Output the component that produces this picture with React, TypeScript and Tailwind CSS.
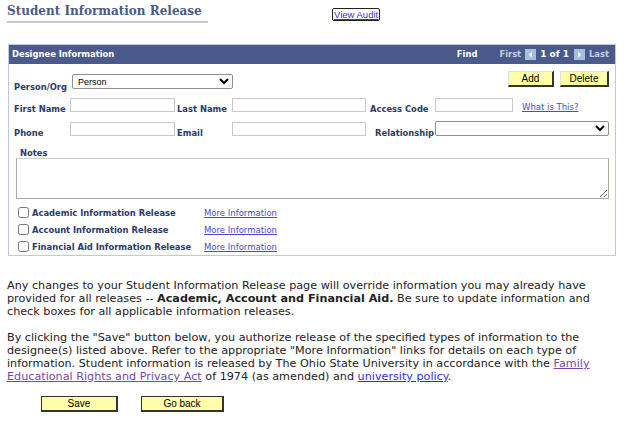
import React from "react";

const V = { fontFamily: '"DejaVu Sans", Verdana, sans-serif' };
const A = { fontFamily: '"Liberation Sans", Arial, sans-serif' };

function NavIcon({ dir }: { dir: "l" | "r" }) {
  return (
    <svg width="11" height="11" viewBox="0 0 11 11" className="block shrink-0">
      <rect x="0" y="0" width="11" height="11" fill="#a7bfd9" />
      {dir === "l" ? (
        <polygon points="7,2.5 3.5,5.5 7,8.5" fill="#e8f0f8" />
      ) : (
        <polygon points="4,2.5 7.5,5.5 4,8.5" fill="#e8f0f8" />
      )}
    </svg>
  );
}

const label = "text-[8.4px] font-bold text-[#2b3a66] leading-none shrink-0";
const input = "h-[14px] border border-[#c8c8c8] bg-white shrink-0";
const link = "text-[8.5px] leading-none text-[#4a4ad0] underline";

export default function App() {
  return (
    <div className="w-[640px] h-[428px] bg-white relative overflow-hidden" style={V}>
      {/* Title row */}
      <div className="flex items-start pl-[7px] pt-[4px]">
        <div className="w-[201px]">
          <div
            className="text-[12px] font-bold text-[#4a5a8a] leading-[15px]"
            style={{ fontFamily: '"DejaVu Serif", Georgia, serif' }}
          >
            Student Information Release
          </div>
          <div className="mt-[2px] h-[2px] w-[201px] bg-[#c3c7da]" />
        </div>
        <a
          className="ml-[124px] mt-[4px] text-[9.5px] leading-[11px] text-[#3b2fd6] underline border border-[#222] rounded-[2px] px-[1px]"
          style={A}
        >
          View Audit
        </a>
      </div>

      {/* Panel */}
      <div className="ml-[8px] mt-[21px] w-[608px] h-[212px] border border-[#c4c7db]">
        <div className="h-[19px] bg-[#4a5a8a] flex items-center pl-[3px] pr-[6px] text-[8.4px] font-bold text-white">
          <span>Designee Information</span>
          <span className="ml-auto">Find</span>
          <span className="ml-[22px] text-[#c6cce0]">First</span>
          <span className="ml-[4px]"><NavIcon dir="l" /></span>
          <span className="ml-[4px] text-[9px]">1 of 1</span>
          <span className="ml-[5px]"><NavIcon dir="r" /></span>
          <span className="ml-[4px] text-[#c6cce0]">Last</span>
        </div>

        <div className="relative">
          {/* Add / Delete */}
          <div className="absolute right-[6px] top-[7px] flex gap-[6px]" style={A}>
            <button className="w-[46px] h-[16px] bg-[#ffffaa] border border-[#e0e0e0] border-r-2 border-b-2 border-r-[#333] border-b-[#333] text-[10px] leading-none text-black">
              Add
            </button>
            <button className="w-[49px] h-[16px] bg-[#ffffaa] border border-[#e0e0e0] border-r-2 border-b-2 border-r-[#333] border-b-[#333] text-[10px] leading-none text-black">
              Delete
            </button>
          </div>

          {/* Person/Org */}
          <div className="flex items-end pt-[10px] pl-[5px]">
            <span className={label + " w-[58px] mb-[-2px]"}>Person/Org</span>
            <select
              className="w-[161px] h-[15px] border border-[#8f8f8f] rounded-[2px] bg-white text-[9px] leading-none text-black pl-[1px]"
              style={A}
              defaultValue="Person"
            >
              <option>Person</option>
            </select>
          </div>

          {/* First name row */}
          <div className="flex items-end pt-[9px] pl-[5px]">
            <span className={label + " w-[56px] mb-[-1px]"}>First Name</span>
            <div className={input + " w-[105px]"} />
            <span className={label + " w-[55px] ml-[2px] mb-[-1px]"}>Last Name</span>
            <div className={input + " w-[134px]"} />
            <span className={label + " w-[65px] ml-[4px] mb-[-1px]"}>Access Code</span>
            <div className={input + " w-[78px]"} />
            <a className={link + " ml-[9px] mb-[1px]"}>What is This?</a>
          </div>

          {/* Phone row */}
          <div className="flex items-end pt-[9px] pl-[5px]">
            <span className={label + " w-[56px] mb-[-1px]"}>Phone</span>
            <div className={input + " w-[105px]"} />
            <span className={label + " w-[55px] ml-[2px] mb-[-1px]"}>Email</span>
            <div className={input + " w-[134px]"} />
            <span className={label + " w-[60px] ml-[9px] mb-[-1px]"}>Relationship</span>
            <select className="w-[174px] h-[15px] border border-[#8f8f8f] rounded-[2px] bg-white text-[9px]" defaultValue="">
              <option value=""></option>
            </select>
          </div>

          {/* Notes */}
          <div className="pl-[11px] pt-[13px]">
            <div className={label}>Notes</div>
          </div>
          <div className="pl-[7px] pt-[1px]">
            <textarea className="block w-[593px] h-[41px] border border-[#a9a9a9] border-t-[#cfcfcf] bg-white" />
          </div>

          {/* Checkboxes */}
          <div className="pl-[9px] pt-[7px] flex flex-col gap-[4px]">
            {[
              "Academic Information Release",
              "Account Information Release",
              "Financial Aid Information Release",
            ].map((t) => (
              <div key={t} className="flex items-center h-[13px]">
                <input type="checkbox" className="m-0 w-[11px] h-[11px] shrink-0" />
                <span className={label + " ml-[3px] w-[172px]"}>{t}</span>
                <a className={link}>More Information</a>
              </div>
            ))}
          </div>
        </div>
      </div>

      {/* Paragraphs */}
      <div className="pl-[7px] pt-[23px] w-[594px] text-[11.2px] leading-[13px] text-[#222]">
        <p>
          Any changes to your Student Information Release page will override information you may already have
          provided for all releases -- <b>Academic, Account and Financial Aid.</b> Be sure to update information and
          check boxes for all applicable information releases.
        </p>
        <p className="mt-[13px]">
          By clicking the "Save" button below, you authorize release of the specified types of information to the
          designee(s) listed above. Refer to the appropriate "More Information" links for details on each type of
          information. Student information is released by The Ohio State University in accordance with the{" "}
          <a className="text-[#7d44b0] underline">Family Educational Rights and Privacy Act</a> of 1974 (as amended) and{" "}
          <a className="text-[#3131e0] underline">university policy</a>.
        </p>
      </div>

      {/* Bottom buttons */}
      <div className="flex pl-[41px] pt-[13px] gap-[23px]" style={A}>
        <button className="w-[77px] h-[16px] bg-[#ffffaa] border border-[#333] border-r-2 border-b-2 text-[10px] leading-none text-black">
          Save
        </button>
        <button className="w-[83px] h-[16px] bg-[#ffffaa] border border-[#333] border-r-2 border-b-2 text-[10px] leading-none text-black">
          Go back
        </button>
      </div>
    </div>
  );
}
